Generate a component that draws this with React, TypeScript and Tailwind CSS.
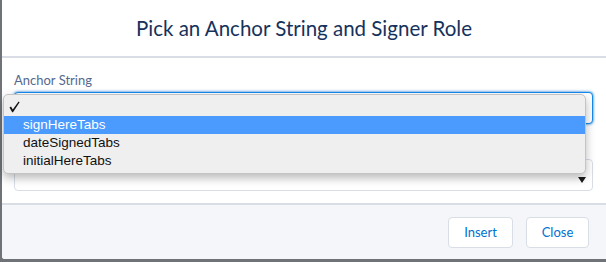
const options = ['signHereTabs', 'dateSignedTabs', 'initialHereTabs'];

export default function App() {
  return (
    <div className="relative h-[262px] w-[606px] overflow-hidden bg-[#6f7378] font-['Lato',sans-serif]">
      <div className="ml-[2px] flex h-[259px] w-[604px] flex-col overflow-hidden rounded-bl-[3px] bg-white">
        {/* Header */}
        <div className="flex h-[58px] shrink-0 items-center justify-center border-b-2 border-[#d8dde6]">
          <h2 className="text-[20.5px] font-normal text-[#16325c]">Pick an Anchor String and Signer Role</h2>
        </div>

        {/* Body */}
        <div className="flex h-[145px] shrink-0 flex-col px-[12px] pt-[12px]">
          <label className="h-[20px] text-[13px] leading-[20px] text-[#54698d]">Anchor String</label>
          <div className="relative mt-[2px] h-[32px] w-[579px] rounded-[4px] border border-[#1589ee] bg-white shadow-[0_0_3px_#0070d2]">
            <div className="absolute right-[7px] top-[10px] flex flex-col gap-[3px]">
              <span className="h-[2px] w-[2px] bg-[#888]"></span>
              <span className="h-[2px] w-[2px] bg-[#888]"></span>
            </div>
          </div>
          <div className="relative mt-[35px] h-[32px] w-[579px] rounded-[4px] border border-[#d8dde6] bg-white">
            <svg className="absolute right-[6px] top-[17px]" width="8" height="6" viewBox="0 0 8 6">
              <path d="M0 0 L8 0 L4 6 Z" fill="#1c1c1c" />
            </svg>
          </div>
        </div>

        {/* Footer */}
        <div className="flex flex-1 items-start justify-end gap-[13px] border-t-2 border-[#d8dde6] bg-[#f4f6f9] pr-[17px] pt-[12px]">
          <button className="h-[31px] w-[65px] rounded-[4px] border border-[#d8dde6] bg-white text-[13px] text-[#0070d2]">Insert</button>
          <button className="h-[31px] w-[63px] rounded-[4px] border border-[#d8dde6] bg-white text-[13px] text-[#0070d2]">Close</button>
        </div>
      </div>

      {/* Native select popup */}
      <div className="absolute left-[3px] top-[94px] h-[80px] w-[583px] rounded-[5px] border border-[#c4c4c4] bg-[#efefef] py-[3px] font-['Liberation_Sans',Arial,sans-serif] text-[13.5px] text-[#111] shadow-[0_4px_10px_rgba(0,0,0,0.28)]">
        <div className="flex h-[18px] items-center pl-[5px]">
          <svg width="11" height="12" viewBox="0 0 11 12">
            <path d="M0.5 6.5 L2 5.6 L3.8 8.6 L9.6 0.4 L10.6 1.2 L4 11.2 L3.2 11.2 Z" fill="#111" />
          </svg>
        </div>
        {options.map((o, i) => (
          <div
            key={o}
            className={`flex h-[18px] items-center pl-[19px] ${i === 0 ? 'bg-[#4a9bfd] text-white' : ''}`}
          >
            {o}
          </div>
        ))}
      </div>
    </div>
  );
}
